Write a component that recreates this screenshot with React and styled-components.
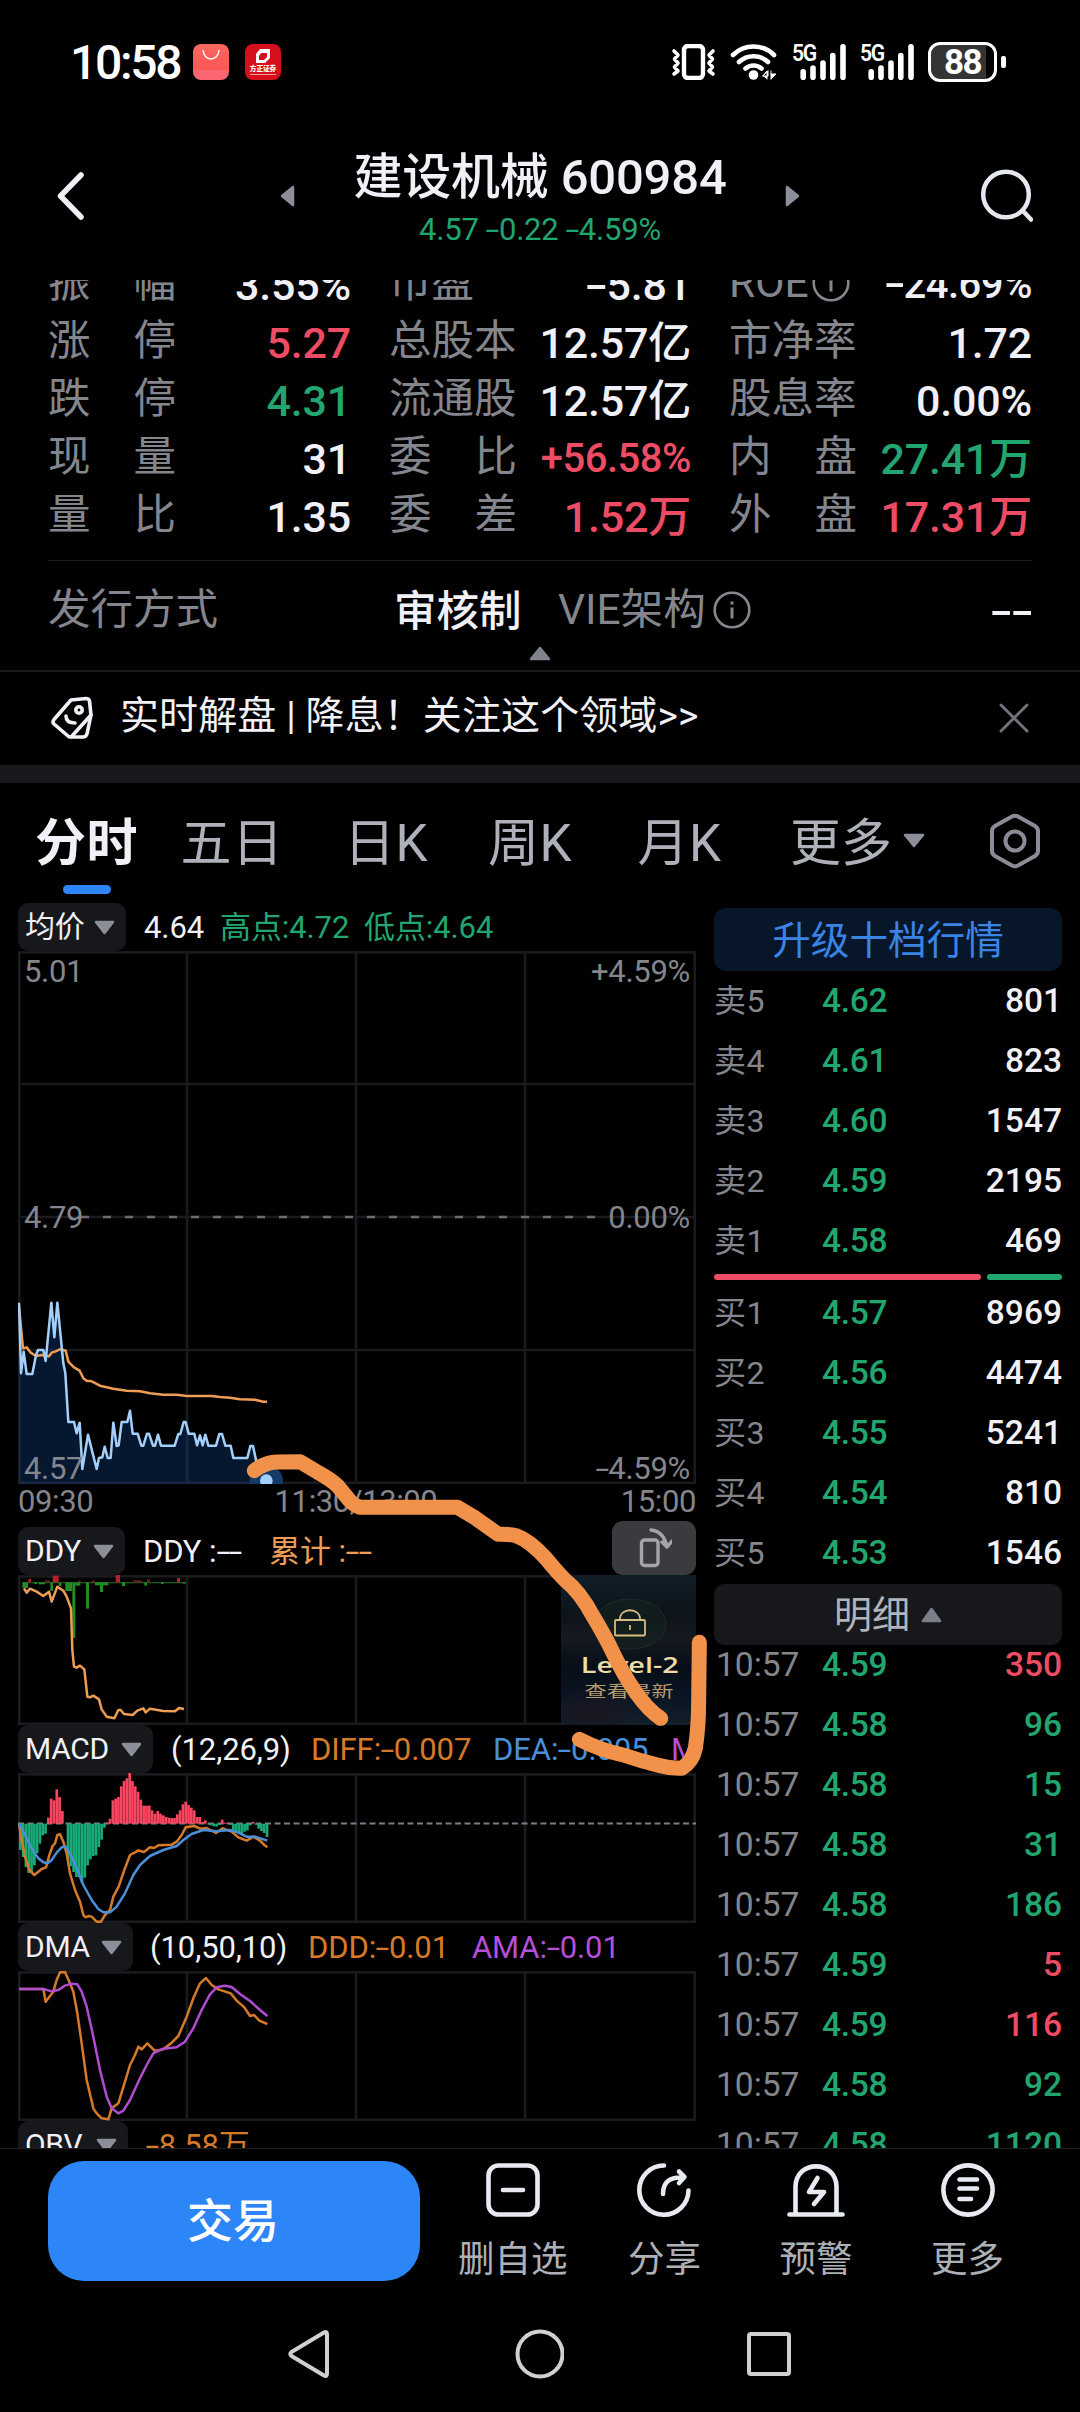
import React from 'react';
import styled, { createGlobalStyle } from 'styled-components';

const GREEN = '#22a670';
const RED = '#ee4c64';
const WHITE = '#f0f0f6';
const GRAY = '#84868e';
const ORANGE = '#d67a2a';
const LINE = '#1a1b1e';

const GlobalStyle = createGlobalStyle`
    * { box-sizing:border-box; }
    body {
        margin:0;
        background:#000;
        color:${WHITE};
        font-family:Roboto, "Noto Sans CJK SC", sans-serif;
    }
    svg { display:block; flex:none; }
`;

const Screen = styled.div`
    position:relative;
    width:1080px;
    height:2412px;
    overflow:hidden;
    background:#000;
`;

/* status bar */
const StatusBar = styled.div`
    height:124px;
    padding:0 74px 0 70px;
    display:flex;
    align-items:center;
    justify-content:space-between;
`;
const StatusLeft = styled.div`
    display:flex;
    align-items:center;
`;
const Clock = styled.span`
    width:123px;
    font-size:48px;
    font-weight:500;
    line-height:60px;
    letter-spacing:-2.3px;
    color:#fff;
    padding-top:2px;
`;
const AppBadge = styled.div`
    width:36px;
    height:36px;
    margin-right:16px;
    border-radius:8px;
    background:${p => p.$bg};
    display:flex;
    flex-direction:column;
    align-items:center;
`;
const BadgeText = styled.span`
    font-size:6.6px;
    line-height:7px;
    font-weight:900;
    color:#fff;
    padding-bottom:1px;
    border-bottom:1px solid #f3a0a4;
`;
const StatusRight = styled.div`
    display:flex;
    align-items:center;
    height:40px;
`;
const Vibrate = styled.svg`
    margin-right:13px;
`;
const Signal = styled.div`
    position:relative;
    width:53px;
    height:36px;
    margin-left:15px;
`;
const SignalLabel = styled.span`
    position:absolute;
    left:-1px;
    top:-2px;
    font-size:23px;
    line-height:24px;
    font-weight:600;
    letter-spacing:-1.5px;
    color:#fff;
    transform:scaleX(.92);
    transform-origin:left;
`;
const Battery = styled.div`
    width:69px;
    height:40px;
    margin-left:14px;
    border:3px solid #fff;
    border-radius:12px;
    background:linear-gradient(90deg, #343434 88%, #000 88%);
    font-size:35px;
    line-height:36px;
    font-weight:700;
    letter-spacing:-1.5px;
    text-align:center;
    color:#fff;
`;
const BatteryNub = styled.div`
    width:5px;
    height:12px;
    margin-left:4px;
    border-radius:2px;
    background:#fff;
`;

/* title */
const Header = styled.header`
    height:156px;
    padding:26px 48px 0 57px;
    display:grid;
    grid-template-columns:223px 520px 1fr 53px;
    align-items:start;
`;
const HeaderIcon = styled.div`
    padding-top:${p => p.$top}px;
`;
const TitleRow = styled.div`
    display:flex;
    justify-content:space-between;
`;
const TitleBox = styled.div`
    text-align:center;
`;
const Title = styled.h1`
    margin:0;
    font-size:49px;
    font-weight:500;
    line-height:56px;
    letter-spacing:-.2px;
    white-space:pre;
`;
const SubTitle = styled.div`
    margin-top:6px;
    font-size:31px;
    line-height:36px;
    letter-spacing:-.2px;
    color:${GREEN};
`;
// the minus of the quote font is as wide as a figure
const Minus = styled.span`
    display:inline-block;
    margin:0 .07em;
    transform:scaleX(1.6);
`;

/* quote figures */
const Stats = styled.section`
    height:280px;
    padding:0 48px;
    overflow:hidden;
`;
const StatsGrid = styled.div`
    margin-top:-26px;
    display:grid;
    grid-template-columns:303px 302px 303px;
    column-gap:38px;
    grid-auto-rows:58px;
`;
const Stat = styled.div`
    display:flex;
    justify-content:space-between;
    align-items:center;
`;
const StatLabel = styled.span`
    width:128px;
    display:flex;
    align-items:center;
    justify-content:${p => p.$spread ? 'space-between' : 'flex-start'};
    gap:3px;
    font-size:42.5px;
    line-height:54px;
    color:${GRAY};
    white-space:nowrap;
`;
const StatValue = styled.span`
    padding-top:3px;
    font-size:${p => p.$small ? 40 : 43}px;
    font-weight:500;
    line-height:54px;
    letter-spacing:${p => p.$small ? -.5 : -.2}px;
    white-space:nowrap;
    color:${p => p.$color || WHITE};
`;
const IssueRow = styled.div`
    height:86px;
    margin:0 48px;
    padding-top:23px;
    border-top:1px solid #1b1c1f;
    display:grid;
    grid-template-columns:346px 164px 1fr auto;
    align-items:start;
    font-size:42.5px;
    line-height:52px;
    color:${GRAY};
    & > b {
        font-weight:500;
        color:${WHITE};
        padding-top:2px;
    }
`;
const WithIcon = styled.span`
    display:flex;
    align-items:center;
    gap:7px;
`;
const Collapse = styled.div`
    height:26px;
    border-bottom:2px solid ${LINE};
    display:flex;
    justify-content:center;
`;
const Notice = styled.div`
    height:93px;
    padding:0 51px 2px;
    display:flex;
    align-items:center;
    font-size:39px;
    line-height:50px;
    & > span {
        flex:1;
        padding:0 0 3px 25px;
        letter-spacing:.1px;
        white-space:pre;
    }
`;
const Band = styled.div`
    height:18px;
    background:#17181c;
`;

/* tabs */
const Tabs = styled.nav`
    height:120px;
    padding:0 40px 0 14px;
    display:grid;
    grid-template-columns:145px 146px 162px 126px 173px 135px 1fr auto;
    font-size:51px;
    line-height:60px;
    color:#aeb1b9;
`;
const Tab = styled.div`
    padding-top:31px;
    display:flex;
    flex-direction:column;
    align-items:center;
    color:${p => p.$active ? WHITE : 'inherit'};
    font-weight:${p => p.$active ? 700 : 400};
    font-size:51px;
    letter-spacing:.4px;
    white-space:nowrap;
    &::after {
        content:'';
        width:48px;
        height:9px;
        margin-top:11px;
        border-radius:5px;
        background:${p => p.$active ? '#2d86f7' : 'transparent'};
    }
`;
const MoreTab = styled.div`
    padding:31px 0 0 24px;
    display:flex;
    align-items:flex-start;
    gap:11px;
    white-space:nowrap;
    & > svg { margin-top:19px; }
`;
const Settings = styled.div`
    padding-top:30px;
`;

/* body */
const Body = styled.main`
    height:1245px;
    overflow:hidden;
    display:grid;
    grid-template-columns:678px 348px;
    column-gap:18px;
    padding-left:18px;
`;
const LeftCol = styled.div`
    min-width:0;
`;
const IndexRow = styled.div`
    height:48px;
    display:flex;
    align-items:center;
    font-size:31px;
    line-height:40px;
    white-space:pre;
    overflow:${p => p.$open ? 'visible' : 'hidden'};
`;
const Chip = styled.div`
    height:48px;
    width:${p => p.$w}px;
    margin-right:${p => p.$gap}px;
    padding:0 11px 0 7px;
    flex:none;
    display:flex;
    align-items:center;
    justify-content:space-between;
    border-radius:10px;
    background:#17181c;
    font-size:30px;
    letter-spacing:-.3px;
`;
const Figure = styled.span`
    flex:none;
    width:${p => p.$w}px;
    padding-top:2px;
    color:${p => p.$color || WHITE};
    letter-spacing:-.1px;
`;
const RotateButton = styled.div`
    width:84px;
    height:54px;
    margin:-6px 0 0 auto;
    border-radius:11px;
    background:#3a3a3f;
    display:flex;
    justify-content:center;
`;
const Plot = styled.div`
    position:relative;
    height:${p => p.$h}px;
`;
const PlotLabel = styled.span`
    position:absolute;
    top:${p => p.$y - 18}px;
    ${p => p.$right ? 'right:6px;' : 'left:6px;'}
    font-size:31px;
    line-height:36px;
    letter-spacing:-.3px;
    color:${GRAY};
`;
const TimeAxis = styled.div`
    height:43px;
    display:flex;
    justify-content:space-between;
    font-size:31px;
    line-height:35px;
    letter-spacing:-.4px;
    color:${GRAY};
    & > span:nth-child(2) { margin-right:2px; }
`;
const LockCard = styled.div`
    position:absolute;
    right:0;
    top:0;
    width:135px;
    height:150px;
    padding-left:2px;
    display:flex;
    flex-direction:column;
    align-items:center;
    background:
        radial-gradient(ellipse 50px 26px at 30px 138px, #1b1620, transparent),
        linear-gradient(180deg, #101e28 0%, #0d1319 28%, #151a20 42%, #070e18 62%, #0a1422 80%, #12202b 100%);
`;
const LockTitle = styled.span`
    margin-top:2px;
    font-family:"Open Sans", sans-serif;
    font-size:21px;
    line-height:24px;
    font-weight:600;
    color:#ecdca6;
    transform:scaleX(1.37);
`;
const LockText = styled.span`
    margin-top:4px;
    font-size:16px;
    line-height:22px;
    color:#b39b6c;
    transform:scaleX(1.39);
`;

/* order book */
const RightCol = styled.div`
    padding-top:5px;
`;
const Upgrade = styled.div`
    height:63px;
    border-radius:12px;
    background:#071629;
    color:#3a84e6;
    font-size:38.6px;
    line-height:65px;
    text-align:center;
`;
const BookRow = styled.div`
    height:60px;
    display:grid;
    grid-template-columns:108px 1fr auto;
    align-items:center;
    font-size:33.5px;
    line-height:40px;
    font-weight:500;
    color:${WHITE};
`;
const Side = styled.span`
    font-size:32px;
    font-weight:400;
    color:${GRAY};
    letter-spacing:.6px;
`;
const Price = styled.span`
    color:${GREEN};
    letter-spacing:-.3px;
`;
const Ratio = styled.div`
    height:6px;
    margin:3px 0;
    display:flex;
    gap:6px;
`;
const RatioPart = styled.i`
    width:${p => p.$w}px;
    height:6px;
    border-radius:3px;
    background:${p => p.$color};
`;
const DetailHead = styled.div`
    height:61px;
    margin:1px 0 -10px;
    border-radius:10px;
    background:#17181c;
    display:flex;
    align-items:center;
    justify-content:center;
    gap:11px;
    font-size:38px;
    line-height:60px;
    color:#b2b4bb;
    & > span { padding-top:1px; }
`;
const TickRow = styled(BookRow)`
    & > span:first-child {
        font-weight:400;
        color:${GRAY};
        padding-left:2px;
    }
    & > span:last-child { color:${p => p.$up ? RED : GREEN}; }
`;

/* bottom */
const Footer = styled.footer`
    height:148px;
    padding:12px 36px 0 48px;
    border-top:1px solid #1d1e21;
    display:grid;
    grid-template-columns:372px 17px repeat(4, 151.6px);
`;
const TradeButton = styled.div`
    height:120px;
    border-radius:36px;
    background:#2d86f7;
    color:#fff;
    font-size:46px;
    font-weight:500;
    line-height:120px;
    text-align:center;
    padding-right:2px;
`;
const Action = styled.div`
    padding-top:2px;
    display:flex;
    flex-direction:column;
    align-items:center;
    font-size:36.5px;
    line-height:44px;
    color:#aeb0b8;
    & > span { margin-top:21px; }
`;
const NavBar = styled.div`
    height:116px;
    padding:30px 289px 0 288px;
    display:flex;
    justify-content:space-between;
`;
const Doodle = styled.svg`
    position:absolute;
    left:0;
    top:0;
    pointer-events:none;
`;

const Num = ({ children }) => children.split(/(-)/).map((part, i) => (
    part === '-' ? <Minus key={i}>-</Minus> : part
));

const Tri = ({ w = 21, h = 15, dir = 'down', color = '#8c8f99' }) => {
    const d = {
        down: `M2 2H${w - 2}L${w / 2} ${h - 2}Z`,
        up: `M2 ${h - 2}H${w - 2}L${w / 2} 2Z`,
        left: `M${w - 2} 2V${h - 2}L2 ${h / 2}Z`,
        right: `M2 2V${h - 2}L${w - 2} ${h / 2}Z`,
    }[dir];
    return (
        <svg width={w} height={h}>
            <path d={d} fill={color} stroke={color} strokeWidth="2.5" strokeLinejoin="round" />
        </svg>
    );
};

const Info = () => (
    <svg width="38" height="38" viewBox="0 0 38 38" fill="none" stroke={GRAY} strokeWidth="2.6">
        <circle cx="19" cy="19" r="17.3" />
        <path d="M19 16.5V27.5M19 10.5V13.5" strokeWidth="3" />
    </svg>
);

const SignalBars = () => (
    <Signal>
        <svg width="53" height="36" stroke="#fff" strokeWidth="5.6" strokeLinecap="round">
            <path d="M10.2 27.8V33.2M20 24V33.2M30 19V33.2M39.8 11.5V33.2M50 2.8V33.2" />
        </svg>
        <SignalLabel>5G</SignalLabel>
    </Signal>
);

const STATS = [
    ['振幅', '3.55%'], ['市盈', '-5.81'], ['ROE', '-24.69%'],
    ['涨停', '5.27', RED], ['总股本', '12.57亿'], ['市净率', '1.72'],
    ['跌停', '4.31', GREEN], ['流通股', '12.57亿'], ['股息率', '0.00%'],
    ['现量', '31'], ['委比', '+56.58%', RED], ['内盘', '27.41万', GREEN],
    ['量比', '1.35'], ['委差', '1.52万', RED], ['外盘', '17.31万', RED],
];

const SELLS = [['卖5', '4.62', 801], ['卖4', '4.61', 823], ['卖3', '4.60', 1547], ['卖2', '4.59', 2195], ['卖1', '4.58', 469]];
const BUYS = [['买1', '4.57', 8969], ['买2', '4.56', 4474], ['买3', '4.55', 5241], ['买4', '4.54', 810], ['买5', '4.53', 1546]];
const TICKS = [
    ['4.59', 350, true], ['4.58', 96], ['4.58', 15], ['4.58', 31], ['4.58', 186],
    ['4.59', 5, true], ['4.59', 116, true], ['4.58', 92], ['4.58', 1120],
];

// chart series are kept in thirds of a pixel
const PRICE = '57,128 63,340 71,275 80,342 97,342 108,285 114,270 130,270 137,303 154,128 163,232 172,128 190,310 196,340 205,486 222,486 230,520 239,488 247,627 264,524 281,592 290,627 297,594 307,592 314,560 323,594 332,594 340,488 350,558 356,556 365,486 382,486 390,452 398,521 413,521 424,557 430,557 441,521 447,521 459,557 465,557 474,524 483,557 524,557 535,522 541,522 551,486 557,486 566,521 583,521 591,556 600,526 608,556 616,524 625,557 648,557 658,522 666,522 676,557 692,557 700,594 742,594 751,558 759,558 768,600 780,625 795,628 798,662';
const AVG = '57,140 69,265 80,262 92,278 108,288 125,285 147,289 155,278 165,275 180,268 197,272 205,305 222,322 239,332 250,355 260,362 275,364 300,377 340,386 380,392 420,394 450,400 490,404 530,404 560,408 635,408 660,411 690,413 720,418 765,419 790,425 801,425';
const DDY = '72,265 80,278 90,266 110,275 130,288 147,275 155,305 172,260 190,272 200,290 213,325 217,450 222,500 230,503 240,497 253,508 262,590 270,592 280,587 297,598 305,628 320,650 343,655 355,630 362,630 372,642 398,645 412,632 430,625 437,637 450,626 490,633 525,634 537,624 552,627';
const DIFF = '57,311 63,350 75,410 88,450 103,465 115,455 125,447 138,442 148,405 158,378 165,370 172,345 180,343 190,365 200,400 210,460 225,510 240,545 250,585 257,592 265,588 275,590 290,605 303,605 315,585 330,570 340,530 356,500 373,450 390,405 405,397 415,391 432,396 450,382 462,384 475,376 515,374 530,365 545,345 557,322 583,318 600,326 620,324 648,339 668,325 695,335 715,352 740,362 760,350 780,362 793,375 802,382';
const DEA = '57,311 75,345 95,385 115,415 130,427 143,430 155,420 170,398 185,382 197,380 210,400 230,445 250,495 275,540 295,567 310,577 330,577 350,560 375,520 400,465 420,435 450,408 490,390 530,378 550,360 575,342 610,330 650,334 690,330 715,338 740,350 765,350 802,362';
const DDD = '57,807 130,807 137,845 150,828 160,815 170,780 180,757 195,756 208,785 220,815 232,880 245,970 260,1080 280,1165 290,1180 305,1195 325,1198 335,1165 355,1150 375,1085 390,1035 405,1005 415,980 425,988 442,970 465,993 490,988 515,968 535,948 560,890 580,835 600,790 618,774 635,795 655,808 692,820 710,842 733,862 750,888 762,885 778,902 802,912';
const AMA = '57,807 130,807 155,814 175,810 195,797 215,791 232,793 245,815 260,860 280,950 300,1050 320,1130 335,1165 355,1180 370,1172 390,1140 415,1085 440,1035 460,1000 490,986 530,982 555,965 580,925 605,870 630,823 650,802 675,797 695,801 720,822 750,843 780,870 802,888';

const HIST = [
    -79, -100, -130, -148, -145, -125, -88, -60, -35, -30, 18, 75, 70, 103, 80, 38, 0,
    -105, -128, -145, -160, -160, -178, -162, -125, -107, -97, -95, -70, -48, -12, 3, 15,
    70, 75, 80, 112, 128, 136, 152, 128, 112, 96, 72, 54, 54, 54, 40, 30, 38, 30, 25, 20, 18, 17, 17,
    28, 40, 58, 66, 56, 48, 40, 20, 20, 5, 10, -2, -5, -8, -9, -4, 12, 3, 2, -3,
    -20, -25, -30, -32, -24, -20, -5, 5, -3, -15, -22, -28, -40,
];

// x, width, height: positive goes up
const DDY_BARS = [
    [85, 8, 10], [135, 15, 6], [158, 18, 20], [234, 8, 5], [275, 9, 6], [347, 13, 22], [400, 25, 6], [441, 9, 9], [531, 9, 13],
    [67, 17, -17], [103, 8, -5], [117, 18, -6], [151, 8, -26], [176, 8, -11], [196, 20, -26], [217, 9, -167],
    [226, 15, -10], [258, 9, -79], [285, 40, -9], [300, 9, -29], [366, 9, -11], [433, 8, -10], [483, 8, -5], [549, 8, -4],
];

const Grid = ({ h, rows = [] }) => (
    <g stroke={LINE} strokeWidth="2.6" fill="none">
        <rect x="1.3" y="1.4" width="675.4" height={h - 2.6} />
        <path d={`M169 0V${h}M338 0V${h}M507 0V${h}`} />
        {rows.map(y => <path key={y} d={`M0 ${y}H678`} />)}
    </g>
);

function StatusIcons() {
    return (
        <StatusRight>
            <Vibrate width="46" height="36" fill="none" stroke="#fff" strokeWidth="4">
                <rect x="13" y="2" width="19" height="32" rx="4" strokeWidth="4.4" />
                <path d="M3 7L7 11L3.5 15L7 19L3.5 23L7 27L3 30M42 7L38 11L41.5 15L38 19L41.5 23L38 27L42 30" strokeWidth="3.6" strokeLinejoin="round" strokeLinecap="round" />
            </Vibrate>
            <svg width="48" height="36" viewBox="0 0 48 36" fill="none" stroke="#fff" strokeWidth="4.6" strokeLinecap="round">
                <g transform="translate(13 0)">
                    <path d="M-10 11A29 29 0 0 1 31 11M-4 18A21 21 0 0 1 25 18M2.5 24.5A12 12 0 0 1 18.5 24.5" />
                    <circle cx="10.5" cy="31" r="4.8" fill="#fff" stroke="none" />
                    <path d="M20 32H25V27ZM20 32L24 27V35M28 27V35M28 35L33 30H28" fill="#fff" strokeWidth="1" />
                </g>
            </svg>
            <SignalBars />
            <SignalBars />
            <Battery>88</Battery>
            <BatteryNub />
        </StatusRight>
    );
}

function Quote() {
    return (
        <>
            <Stats>
                <StatsGrid>
                    {STATS.map(([label, value, color]) => {
                        const spread = label.length === 2 && label !== '市盈';
                        return (
                            <Stat key={label}>
                                <StatLabel $spread={spread}>
                                    {spread ? <><span>{label[0]}</span><span>{label[1]}</span></> : label}
                                    {label === 'ROE' && <Info />}
                                </StatLabel>
                                <StatValue $color={color} $small={value.length === 7}><Num>{value}</Num></StatValue>
                            </Stat>
                        );
                    })}
                </StatsGrid>
            </Stats>
            <IssueRow>
                <span>发行方式</span>
                <b>审核制</b>
                <WithIcon>VIE架构<Info /></WithIcon>
                <b><Num>--</Num></b>
            </IssueRow>
            <Collapse><Tri w={22} h={15} dir="up" color="#80838d" /></Collapse>
            <Notice>
                <svg width="44" height="44" viewBox="0 0 44 44" fill="none" stroke={WHITE} strokeWidth="3.6" strokeLinejoin="round" strokeLinecap="round">
                    <path d="M20 4L35 2.5Q38 2.5 38.5 5L40 19L21 40Q19 42 17 40L3 28Q1 26 3 23.5Z" />
                    <path d="M40 19L36 38Q35 41 32 41H21" />
                    <circle cx="28" cy="14" r="3.2" />
                    <path d="M15 20Q15 27 24 27" />
                </svg>
                <span>实时解盘 | 降息！关注这个领域&gt;&gt;</span>
                <svg width="30" height="30" stroke="#70737c" strokeWidth="3" strokeLinecap="round">
                    <path d="M2 2L28 28M28 2L2 28" />
                </svg>
            </Notice>
            <Band />
        </>
    );
}

function Charts() {
    return (
        <LeftCol>
            <IndexRow>
                <Chip $w={108} $gap={18}>均价<Tri /></Chip>
                <Figure $w={76}>4.64</Figure>
                <Figure $w={144} $color={GREEN}>高点:4.72</Figure>
                <Figure $w={140} $color={GREEN}>低点:4.64</Figure>
            </IndexRow>
            <Plot $h={533}>
                <svg width="678" height="533">
                    <Grid h={533} rows={[133, 266, 399]} />
                    <path d="M63 266H590" stroke="#6b6d74" strokeWidth="2.4" strokeDasharray="8 14" />
                    <g transform="translate(-18 309) scale(.33333)" fill="none" strokeLinejoin="round">
                        <polygon points={`${PRICE} 798,674 57,674`} fill="#11468a" fillOpacity=".34" />
                        <polyline points={AVG} stroke="#ee9d55" strokeWidth="7.5" />
                        <polyline points={PRICE} stroke="#a3d0fb" strokeWidth="7.5" />
                        <path d="M750 674A50 50 0 1 1 848 674Z" fill="#143a69" />
                        <circle cx="799" cy="662" r="19" fill="#a3d0fb" />
                    </g>
                </svg>
                <PlotLabel $y={21}>5.01</PlotLabel>
                <PlotLabel $y={21} $right>+4.59%</PlotLabel>
                <PlotLabel $y={267}>4.79</PlotLabel>
                <PlotLabel $y={267} $right>0.00%</PlotLabel>
                <PlotLabel $y={518}>4.57</PlotLabel>
                <PlotLabel $y={518} $right><Num>-4.59%</Num></PlotLabel>
            </Plot>
            <TimeAxis>
                <span>09:30</span>
                <span>11:30/13:00</span>
                <span>15:00</span>
            </TimeAxis>

            <IndexRow $open>
                <Chip $w={107} $gap={18}>DDY<Tri /></Chip>
                <Figure $w={126}><Num>DDY :--</Num></Figure>
                <Figure $w={120} $color="#ee9d55"><Num>累计 :--</Num></Figure>
                <RotateButton>
                    <svg width="36" height="54" fill="none" stroke="#a4a5aa" strokeWidth="3.4" strokeLinejoin="round" strokeLinecap="round">
                        <rect x="5.5" y="19" width="16.5" height="25.5" rx="3" />
                        <path d="M15 9Q27 10 31 25M26 21L31 26L36 20" />
                    </svg>
                </RotateButton>
            </IndexRow>
            <Plot $h={150}>
                <svg width="678" height="150">
                    <Grid h={150} />
                    <g transform="translate(-18 -75) scale(.33333)" fill="none">
                        <path d="M67 248H557" stroke="#1d5c20" strokeWidth="4" />
                        {DDY_BARS.map(([x, w, v]) => (
                            <rect key={x} x={x} y={v > 0 ? 247 - v : 247} width={w} height={Math.abs(v)}
                                fill={v > 0 ? (v > 9 ? '#b3202a' : '#701a1d') : '#238a24'} />
                        ))}
                        <polyline points={DDY} stroke="#ee9d55" strokeWidth="7.5" strokeLinejoin="round" />
                    </g>
                </svg>
                <LockCard>
                    <svg width="74" height="76" fill="none" stroke="#d3bd80" strokeWidth="1.8">
                        <ellipse cx="37" cy="49" rx="36" ry="25" fill="#17261f" fillOpacity=".45" stroke="#1d2c2c" strokeWidth="1" />
                        <rect x="22" y="45" width="30" height="15.5" rx="1" />
                        <path d="M27 45C26 32 48 32 47 45M37 50V55" />
                    </svg>
                    <LockTitle>Level-2</LockTitle>
                    <LockText>查看最新</LockText>
                </LockCard>
            </Plot>

            <IndexRow>
                <Chip $w={135} $gap={18}>MACD<Tri /></Chip>
                <Figure $w={140}>(12,26,9)</Figure>
                <Figure $w={182} $color={ORANGE}><Num>DIFF:-0.007</Num></Figure>
                <Figure $w={178} $color="#4a8fd9"><Num>DEA:-0.005</Num></Figure>
                <Figure $w={60} $color="#b34fd8">M</Figure>
            </IndexRow>
            <Plot $h={150}>
                <svg width="678" height="150">
                    <Grid h={150} />
                    <path d="M0 50.5H678" stroke="#7c7e85" strokeWidth="2" strokeDasharray="6 3.5" />
                    <g transform="translate(-18 -53) scale(.33333)" fill="none" strokeLinejoin="round">
                        {HIST.map((v, i) => (
                            <rect key={i} x={57 + i * 8.41} y={v > 0 ? 311 - v : 311} width="8" height={Math.abs(v)}
                                fill={v > 0 ? '#fb4661' : '#17ac77'} />
                        ))}
                        <polyline points={DIFF} stroke={ORANGE} strokeWidth="7.5" />
                        <polyline points={DEA} stroke="#4a8fd9" strokeWidth="7.5" />
                    </g>
                </svg>
            </Plot>

            <IndexRow>
                <Chip $w={115} $gap={17}>DMA<Tri /></Chip>
                <Figure $w={158}>(10,50,10)</Figure>
                <Figure $w={164} $color={ORANGE}><Num>DDD:-0.01</Num></Figure>
                <Figure $w={180} $color="#b34fd8"><Num>AMA:-0.01</Num></Figure>
            </IndexRow>
            <Plot $h={150}>
                <svg width="678" height="150">
                    <Grid h={150} />
                    <g transform="translate(-18 -251) scale(.33333)" fill="none" strokeLinejoin="round">
                        <polyline points={DDD} stroke={ORANGE} strokeWidth="7.5" />
                        <polyline points={AMA} stroke="#b04cd2" strokeWidth="7.5" />
                    </g>
                </svg>
            </Plot>
            <IndexRow>
                <Chip $w={110} $gap={18}>OBV<Tri /></Chip>
                <Figure $w={140} $color={ORANGE}><Num>-8.58万</Num></Figure>
            </IndexRow>
        </LeftCol>
    );
}

const Level = ({ row: [side, price, volume] }) => (
    <BookRow>
        <Side>{side}</Side>
        <Price>{price}</Price>
        <span>{volume}</span>
    </BookRow>
);

function OrderBook() {
    return (
        <RightCol>
            <Upgrade>升级十档行情</Upgrade>
            {SELLS.map(row => <Level key={row[0]} row={row} />)}
            <Ratio>
                <RatioPart $w={267} $color={RED} />
                <RatioPart $w={75} $color={GREEN} />
            </Ratio>
            {BUYS.map(row => <Level key={row[0]} row={row} />)}
            <DetailHead><span>明细</span><Tri w={21} h={16} dir="up" color="#7b7e88" /></DetailHead>
            {TICKS.map(([price, volume, up], i) => (
                <TickRow key={i} $up={up}>
                    <span>10:57</span>
                    <Price>{price}</Price>
                    <span>{volume}</span>
                </TickRow>
            ))}
        </RightCol>
    );
}

const ACTIONS = [
    ['删自选', <><rect x="2.5" y="2.5" width="49" height="49" rx="10" /><path d="M17 27H37" /></>],
    ['分享', <><path d="M27 2.5A24.6 24.6 0 1 0 51.5 27.5" /><path d="M26 31C26 19 33 14 45 14.5M42 8.5L47.5 14L42 20" /></>],
    ['预警', <><path d="M6.5 51V24C6.5 -3.5 47.5 -3.5 47.5 24V51M0.5 51.5H53.5" /><path d="M28.5 15L20 29H35L25 41" /></>],
    ['更多', <><circle cx="27" cy="27" r="24.6" /><path d="M18.5 16.5H36M18.5 25.5H36M18.5 36H30" /></>],
];

function App() {
    return (
        <>
            <GlobalStyle />
            <Screen>
                <StatusBar>
                    <StatusLeft>
                        <Clock>10:58</Clock>
                        <AppBadge $bg="linear-gradient(180deg, #fa6a60 0%, #fb5757 70%, #fb6670 74%)">
                            <svg width="36" height="20" fill="none" stroke="#fff" strokeWidth="1.5">
                                <path d="M10 6C11 18 25 18 26 6" />
                            </svg>
                        </AppBadge>
                        <AppBadge $bg="#d50f1c">
                            <svg width="36" height="22" fill="none">
                                <path fillRule="evenodd" d="M15 5H25V14L20 19H11V10ZM16 9L14 12V16H19L22 13V9Z" fill="#fff" />
                            </svg>
                            <BadgeText>方正证券</BadgeText>
                        </AppBadge>
                    </StatusLeft>
                    <StatusIcons />
                </StatusBar>
                <Header>
                    <HeaderIcon $top={22}>
                        <svg width="28" height="48" fill="none" stroke={WHITE} strokeWidth="5.5" strokeLinecap="round" strokeLinejoin="round">
                            <path d="M24 3L3.5 24L24 45" />
                        </svg>
                    </HeaderIcon>
                    <TitleRow>
                        <HeaderIcon $top={35}><Tri w={15} h={22} dir="left" /></HeaderIcon>
                        <TitleBox>
                            <Title>建设机械 600984</Title>
                            <SubTitle><Num>4.57 -0.22 -4.59%</Num></SubTitle>
                        </TitleBox>
                        <HeaderIcon $top={35}><Tri w={15} h={22} dir="right" /></HeaderIcon>
                    </TitleRow>
                    <span />
                    <HeaderIcon $top={19}>
                        <svg width="54" height="54" fill="none" stroke="#e6e8f0" strokeWidth="4.5" strokeLinecap="round">
                            <circle cx="27" cy="25.5" r="22.8" />
                            <path d="M44 42L52 50.5" />
                        </svg>
                    </HeaderIcon>
                </Header>
                <Quote />
                <Tabs>
                    <Tab $active>分时</Tab>
                    <Tab>五日</Tab>
                    <Tab>日K</Tab>
                    <Tab>周K</Tab>
                    <Tab>月K</Tab>
                    <MoreTab>更多<Tri w={22} h={15} /></MoreTab>
                    <span />
                    <Settings>
                        <svg width="50" height="56" viewBox="0 0 50 56" fill="none" stroke="#8a8d96" strokeWidth="4" strokeLinejoin="round">
                            <path d="M22 3.5Q25 2 28 3.5L45 13Q48 15 48 18V38Q48 41 45 43L28 52.5Q25 54 22 52.5L5 43Q2 41 2 38V18Q2 15 5 13Z" />
                            <circle cx="25" cy="28" r="9.5" />
                        </svg>
                    </Settings>
                </Tabs>
                <Body>
                    <Charts />
                    <OrderBook />
                </Body>
                <Footer>
                    <TradeButton>交易</TradeButton>
                    <span />
                    {ACTIONS.map(([label, icon]) => (
                        <Action key={label}>
                            <svg width="54" height="54" overflow="visible" fill="none" stroke="#e8eaf2" strokeWidth="4.6" strokeLinecap="round" strokeLinejoin="round">
                                {icon}
                            </svg>
                            <span>{label}</span>
                        </Action>
                    ))}
                </Footer>
                <NavBar>
                    <svg width="42" height="56" fill="none" stroke="#d0d0d0" strokeWidth="4" strokeLinejoin="round">
                        <path d="M36 6.5Q39 5 39 8.5V47.5Q39 51 36 49.5L3.5 30Q1 28 3.5 26Z" />
                    </svg>
                    <svg width="50" height="56" fill="none" stroke="#d0d0d0" strokeWidth="4">
                        <circle cx="26" cy="28" r="22.5" />
                    </svg>
                    <svg width="44" height="56" fill="none" stroke="#d0d0d0" strokeWidth="4">
                        <rect x="2" y="8" width="40" height="40" rx="2" />
                    </svg>
                </NavBar>
                <Doodle width="1080" height="2412" fill="none" stroke="#f2924a" strokeLinecap="round" strokeLinejoin="round">
                    <g transform="translate(240 1420) scale(.33333)" strokeWidth="45">
                        <path d="M43 152Q75 127 110 126L180 125L235 158Q275 180 295 200L330 243Q345 258 362 262H652L700 290L775 343Q810 342 828 347Q870 362 920 418Q950 455 975 480Q1020 515 1060 590Q1090 640 1110 680C1150 765 1200 855 1262 895" />
                        <path d="M1018 958Q1080 990 1150 1005Q1200 1022 1255 1036Q1290 1046 1325 1045Q1358 1025 1366 985Q1376 920 1376 840L1378 667" />
                    </g>
                </Doodle>
            </Screen>
        </>
    );
}

export default App;
